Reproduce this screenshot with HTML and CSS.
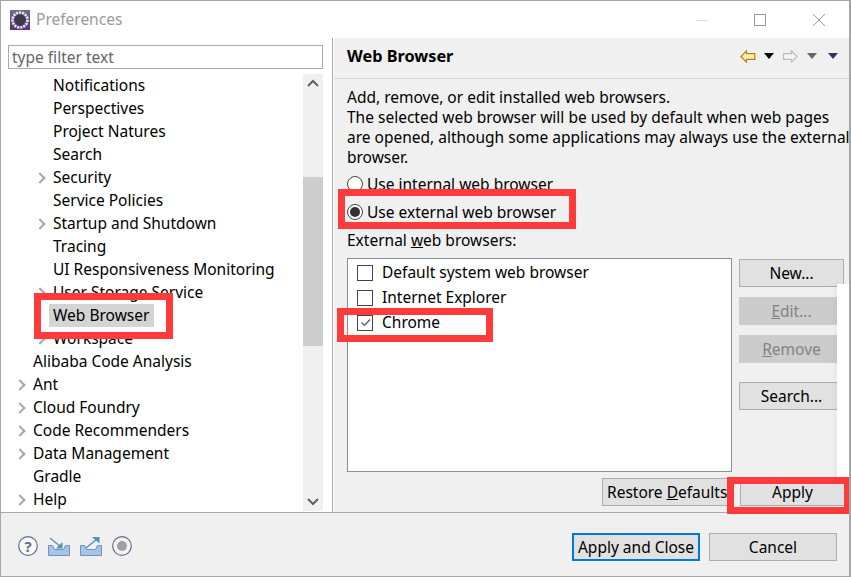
FILE: index.html
```html
<!DOCTYPE html>
<html lang="en">
<head>
<meta charset="utf-8">
<title>Preferences</title>
<link rel="stylesheet" href="styles.css">
</head>
<body>
<div class="window">
  <header class="titlebar">
    <svg class="app-icon" width="20" height="20" viewBox="0 0 20 20">
      <defs><linearGradient id="pg" x1="0" y1="0" x2="0" y2="1"><stop offset="0" stop-color="#6f6a8c"/><stop offset="1" stop-color="#5b2f86"/></linearGradient></defs>
      <rect width="20" height="20" fill="url(#pg)"/>
      <circle cx="10" cy="10" r="7.500" fill="none" stroke="#e8e8e8" stroke-width="2.600" stroke-dasharray="2.200 .9"/>
      <circle cx="10" cy="10" r="5.600" fill="#3c3a46"/>
    </svg>
    <span class="title">Preferences</span>
    <div class="win-controls">
      <svg width="12" height="12" viewBox="0 0 12 12" class="wc-min"><path d="M0 6.500h12" stroke="#d9d9d9"/></svg>
      <svg width="12" height="12" viewBox="0 0 12 12" class="wc-max"><rect x=".5" y=".5" width="11" height="11" fill="none" stroke="#999"/></svg>
      <svg width="12" height="12" viewBox="0 0 12 12" class="wc-close"><path d="M0 0l12 12M12 0L0 12" stroke="#999"/></svg>
    </div>
  </header>
  <div class="main">
    <aside class="left">
      <input class="filter" type="text" value="type filter text">
      <div class="tree-wrap">
        <ul class="tree">
          <li class="row l2">Notifications</li>
          <li class="row l2">Perspectives</li>
          <li class="row l2">Project Natures</li>
          <li class="row l2">Search</li>
          <li class="row l2 exp">Security</li>
          <li class="row l2">Service Policies</li>
          <li class="row l2 exp">Startup and Shutdown</li>
          <li class="row l2">Tracing</li>
          <li class="row l2">UI Responsiveness Monitoring</li>
          <li class="row l2 exp">User Storage Service</li>
          <li class="row l2"><span class="selected">Web Browser</span></li>
          <li class="row l2 exp">Workspace</li>
          <li class="row l1">Alibaba Code Analysis</li>
          <li class="row l1 exp">Ant</li>
          <li class="row l1 exp">Cloud Foundry</li>
          <li class="row l1 exp">Code Recommenders</li>
          <li class="row l1 exp">Data Management</li>
          <li class="row l1">Gradle</li>
          <li class="row l1 exp">Help</li>
        </ul>
        <div class="scrollbar">
          <svg class="sb-arrow" width="20" height="20" viewBox="0 0 20 20"><path d="M5 12l5-5 5 5" fill="none" stroke="#606060" stroke-width="2"/></svg>
          <div class="sb-track"><div class="sb-thumb"></div></div>
          <svg class="sb-arrow" width="20" height="20" viewBox="0 0 20 20"><path d="M5 8l5 5 5-5" fill="none" stroke="#606060" stroke-width="2"/></svg>
        </div>
      </div>
    </aside>
    <section class="right">
      <div class="page-head">
        <h1>Web Browser</h1>
        <div class="nav-icons">
          <svg width="16" height="13" viewBox="0 0 16 13"><path d="M6.500.8L.9 6.500l5.600 5.700V9.300h8.300V3.700H6.500z" fill="#fdeeb8" stroke="#c07f0c" stroke-width="1.200"/></svg>
          <svg class="tri tri-a" width="10" height="6" viewBox="0 0 10 6"><path d="M0 0h10L5 6z" fill="#000"/></svg>
          <svg class="fwd" width="15" height="13" viewBox="0 0 15 13"><path d="M8.500.8l5.600 5.700-5.600 5.700V9.300H.5V3.700h8z" fill="#f4f4f4" stroke="#bdbdbd" stroke-width="1.200"/></svg>
          <svg class="tri tri-b" width="10" height="6" viewBox="0 0 10 6"><path d="M0 0h10L5 6z" fill="#666"/></svg>
          <svg class="tri tri-c" width="10" height="6" viewBox="0 0 10 6"><path d="M0 0h10L5 6z" fill="#3f2a66"/></svg>
        </div>
      </div>
      <div class="content">
        <p class="desc">Add, remove, or edit installed web browsers.<br>The selected web browser will be used by default when web pages are opened, although some applications may always use the external browser.</p>
        <label class="radio r-first"><span class="dot"></span>Use internal web browser</label>
        <label class="radio"><span class="dot on"></span>Use external web browser</label>
        <div class="list-label">External <u>w</u>eb browsers:</div>
        <div class="list-area">
          <div class="listbox">
            <div class="item"><span class="check"></span>Default system web browser</div>
            <div class="item"><span class="check"></span>Internet Explorer</div>
            <div class="item"><span class="check"><svg width="13" height="13" viewBox="0 0 13 13"><path d="M2.500 6.500l3 3 5.500-6" fill="none" stroke="#555" stroke-width="1.200"/></svg></span>Chrome</div>
          </div>
          <div class="side-buttons">
            <button class="btn">New...</button>
            <button class="btn off"><u>E</u>dit...</button>
            <button class="btn off"><u>R</u>emove</button>
            <button class="btn search">Search...</button>
          </div>
        </div>
        <div class="page-actions">
          <button class="btn restore">Restore <u>D</u>efaults</button>
          <button class="btn apply">Apply</button>
        </div>
      </div>
    </section>
  </div>
  <footer class="footer">
    <div class="foot-icons">
      <svg width="20" height="20" viewBox="0 0 20 20"><circle cx="10" cy="10" r="9.300" fill="#f8f8f8" stroke="#5f6f8f" stroke-width="1.200"/><text x="10" y="15.500" text-anchor="middle" class="q">?</text></svg>
      <svg width="22" height="20" viewBox="0 0 22 20"><path d="M.5 9.500h4l2 4h9l2-4h4v10H.5z" fill="#a9c4e2" stroke="#6d93bd"/><path d="M2 2l11 9" stroke="#4e93b8" stroke-width="1.300"/><path d="M14.500 6v6.500H8z" fill="#4e93b8"/></svg>
      <svg width="22" height="20" viewBox="0 0 22 20"><path d="M.5 9.500h4l2 4h9l2-4h4v10H.5z" fill="#a9c4e2" stroke="#6d93bd"/><path d="M6 12L17 3" stroke="#4e93b8" stroke-width="1.300"/><path d="M12 1h7.500v6.500z" fill="#4e93b8"/></svg>
      <svg width="20" height="20" viewBox="0 0 20 20"><circle cx="10" cy="10" r="9.300" fill="#f4f4f4" stroke="#5f6f8f" stroke-width="1.200"/><circle cx="10" cy="10" r="5" fill="#a0a0a0"/></svg>
    </div>
    <div class="foot-buttons">
      <button class="btn default">Apply and Close</button>
      <button class="btn cancel">Cancel</button>
    </div>
  </footer>
  <div class="white-strip"></div>
  <div class="mark m-web"></div>
  <div class="mark m-radio"></div>
  <div class="mark m-chrome"></div>
  <div class="mark m-apply"></div>
</div>
</body>
</html>
```
FILE: styles.css
```css
* { box-sizing: border-box; }
html, body { margin: 0; padding: 0; background: #fff; }
body { width: 851px; height: 581px; overflow: hidden; font-family: "Noto Sans", "Open Sans", sans-serif; font-size: 15.5px; color: #000; }
.window { position: relative; width: 851px; height: 577px; border: solid #a6a6a6; border-width: 1px 2px 1px 1px; display: flex; flex-direction: column; background: #fff; overflow: hidden; }
.titlebar { height: 37px; flex: none; display: flex; align-items: center; padding: 0 0 0 9px; background: #fff; }
.app-icon { flex: none; }
.title { margin-left: 6px; margin-top: -2px; font-size: 15.5px; color: #9b9b9b; }
.win-controls { margin-left: auto; display: flex; align-items: center; }
.wc-min { margin-right: 46px; }
.wc-max { margin-right: 47px; }
.wc-close { margin-right: 24px; }
.main { flex: 1; min-height: 0; display: flex; }
.left { width: 332px; flex: none; background: #fff; padding: 7px 9px 1px 7px; display: flex; flex-direction: column; border-right: 1px solid #a9a9a9; }
.filter { width: 315px; height: 24px; flex: none; border: 1px solid #a9a9a9; padding: 0 3px; font: 15.5px "Noto Sans", sans-serif; color: #666; outline: none; }
.tree-wrap { margin-top: 5px; flex: 1; min-height: 0; display: flex; }
.tree { list-style: none; margin: 0; padding: 0; width: 295px; flex: none; overflow: hidden; }
.row { position: relative; height: 23px; line-height: 23px; white-space: nowrap; }
.l2 { padding-left: 45px; }
.l1 { padding-left: 25px; }
.exp::before { content: ""; position: absolute; top: 8px; width: 6px; height: 6px; border: solid #a8a8a8; border-width: 2px 2px 0 0; transform: rotate(45deg); }
.l2.exp::before { left: 28px; }
.l1.exp::before { left: 8px; }
.selected { display: inline-block; background: #d4d4d4; margin-left: -4px; padding: 0 5px 0 4px; height: 23px; }
.scrollbar { width: 20px; flex: none; background: #f0f0f0; display: flex; flex-direction: column; }
.sb-arrow { flex: none; }
.sb-track { flex: 1; padding-top: 83px; }
.sb-thumb { height: 169px; background: #cdcdcd; }
.right { flex: 1; min-width: 0; background: #f0f0f0; border-left: 1px solid #fff; display: flex; flex-direction: column; }
.page-head { height: 41px; flex: none; display: flex; align-items: center; border-bottom: 1px solid #d9d9d9; padding: 0 0 4px 13px; }
.page-head h1 { margin: 0; font-size: 16.3px; font-weight: 700; }
.nav-icons { margin-left: auto; display: flex; align-items: center; padding-right: 11px; }
.tri-a { margin-left: 8px; }
.fwd { margin-left: 9px; }
.tri-b { margin-left: 9px; }
.tri-c { margin-left: 11px; }
.content { flex: 1; min-height: 0; padding: 8px 0 0 13px; display: flex; flex-direction: column; }
.desc { margin: 0; line-height: 20px; width: 503px; white-space: normal; }
.radio { display: flex; align-items: center; height: 28px; }
.r-first { margin-top: 3px; }
.dot { width: 16px; height: 16px; margin: 0 4px 0 -1px; padding: 0; border: 1px solid #444; border-radius: 50%; background: #fff; flex: none; position: relative; margin-left: 0; }
.dot.on::after { content: ""; position: absolute; inset: 2px; border-radius: 50%; background: #333; }
.list-label { height: 30px; line-height: 28px; }
.list-area { display: flex; margin-top: 2px; align-items: flex-start; }
.listbox { width: 385px; height: 214px; border: 1px solid #888e96; background: #fff; padding: 1px 0 0 9px; }
.item { height: 25px; line-height: 25px; display: flex; align-items: center; white-space: nowrap; }
.check { width: 16px; height: 16px; border: 1px solid #444; background: #fff; margin-right: 9px; flex: none; display: flex; align-items: center; justify-content: center; }
.side-buttons { margin-left: 7px; margin-top: 1px; display: flex; flex-direction: column; gap: 10px; width: 105px; }
.btn { display: block; height: 28px; padding: 0; border: 1px solid #adadad; background: #e1e1e1; font: 15.5px "Noto Sans", sans-serif; color: #000; text-align: center; white-space: nowrap; }
.btn.off { background: #cccccc; border-color: #cccccc; color: #838383; }
.btn.search { margin-top: 9px; }
.page-actions { display: flex; margin-top: 6px; padding-left: 255px; gap: 12px; }
.restore { width: 126px; text-align: left; padding-left: 4px; overflow: hidden; }
.apply { width: 105px; }
.footer { height: 64px; flex: none; background: #f0f0f0; border-top: 1px solid #a9a9a9; display: flex; align-items: flex-start; padding: 20px 0 0 17px; }
.foot-icons { display: flex; align-items: flex-start; gap: 10px; margin-top: 3px; }
.q { font: 700 15px "Noto Sans", sans-serif; fill: #5f6f8f; }
.foot-buttons { margin-left: auto; display: flex; gap: 9px; padding-right: 12px; }
.default { width: 128px; border: 2px solid #0078d7; }
.cancel { width: 128px; }
.white-strip { position: absolute; left: 836px; top: 283px; width: 14px; height: 194px; background: #fff; box-shadow: -3px 0 4px rgba(0,0,0,.04); }
.mark { position: absolute; border: 7px solid #fe3b3b; }
.m-web { left: 33px; top: 292px; width: 139px; height: 46px; }
.m-radio { left: 337px; top: 188px; width: 238px; height: 40px; }
.m-chrome { left: 336px; top: 307px; width: 156px; height: 34px; }
.m-apply { left: 726px; top: 476px; width: 124px; height: 37px; }
```
